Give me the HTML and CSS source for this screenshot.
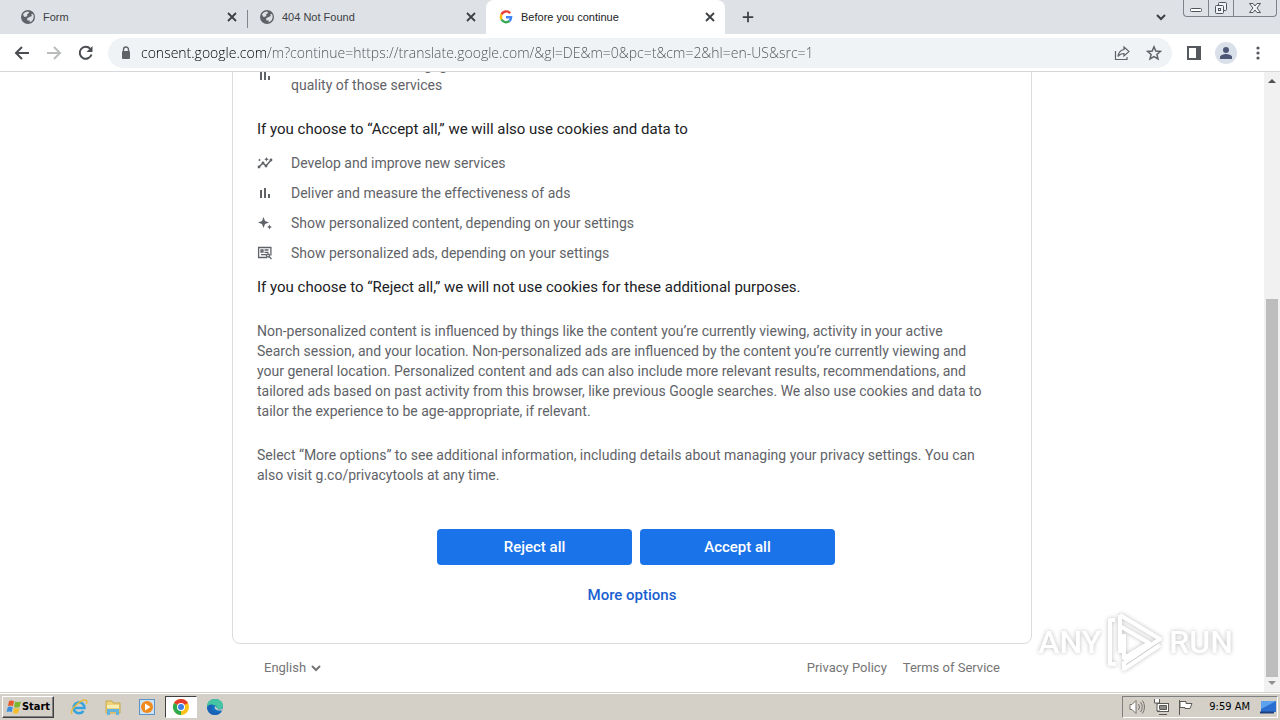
FILE: index.html
```html
<!doctype html>
<html lang="en">
  <head>
    <meta charset="UTF-8">
    <meta name="viewport" content="width=device-width, initial-scale=1.0">
    <title>Before you continue</title>
    <link rel="stylesheet" href="styles.css">
  </head>
  <body>

    <!-- shared icons -->
    <svg class="sprite" aria-hidden="true">
      <symbol id="globe" viewBox="0 0 16 16">
        <circle cx="8" cy="8" r="7" fill="#5f6368"/>
        <path d="M3 5.500C4 3.500 6 2.500 8.500 2.500L9 4 7 5.500 7.500 7 5 8 4 7.500ZM7 9.500L9.500 8 12 7 11 5.500 13 5C14.500 8 13.500 12 9.500 13.300L10 11.500 7.500 11.500Z" fill="#dee1e6"/>
      </symbol>
      <symbol id="close" viewBox="0 0 16 16">
        <path d="M4 4l8 8M12 4l-8 8" stroke="#3c4043" stroke-width="1.800"/>
      </symbol>
      <symbol id="chart" viewBox="0 0 16 16">
        <path d="M3 5h2v8H3zM7 3h2v10H7zM11 9h2v4h-2z" fill="#5f6368"/>
      </symbol>
      <symbol id="chevron" viewBox="0 0 12 12">
        <path d="M2 4l4 4 4-4" fill="none" stroke="currentColor" stroke-width="2"/>
      </symbol>
    </svg>

    <header class="tabs">
      <div class="tab">
        <svg class="icon"><use href="#globe"/></svg>
        <span class="tab-title">Form</span>
        <button class="tab-close" aria-label="Close tab"><svg class="icon"><use href="#close"/></svg></button>
      </div>
      <div class="tab tab-divided">
        <svg class="icon"><use href="#globe"/></svg>
        <span class="tab-title">404 Not Found</span>
        <button class="tab-close" aria-label="Close tab"><svg class="icon"><use href="#close"/></svg></button>
      </div>
      <div class="tab tab-active">
        <svg class="icon" viewBox="0 0 16 16" fill="none" stroke-width="2.400">
          <path d="M12.200 4.200A5.200 5.200 0 0 0 3.500 5.500" stroke="#ea4335"/>
          <path d="M3.500 5.500A5.200 5.200 0 0 0 3.500 10.500" stroke="#fbbc05"/>
          <path d="M3.500 10.500A5.200 5.200 0 0 0 11.400 12" stroke="#34a853"/>
          <path d="M8 8.200H13.100A5.200 5.200 0 0 1 11.400 12" stroke="#4285f4"/>
        </svg>
        <span class="tab-title">Before you continue</span>
        <button class="tab-close" aria-label="Close tab"><svg class="icon"><use href="#close"/></svg></button>
      </div>
      <button class="new-tab" aria-label="New tab">
        <svg class="icon" viewBox="0 0 16 16"><path d="M8 2v12M2 8h12" stroke="#3c4043" stroke-width="2"/></svg>
      </button>
      <button class="tab-search" aria-label="Search tabs"><svg class="icon-small"><use href="#chevron"/></svg></button>
      <div class="window-buttons">
        <button aria-label="Minimize"><svg class="icon" viewBox="0 0 16 16"><rect x="2.500" y="8.500" width="11" height="3" rx="1" fill="#fff" stroke="#50545c"/></svg></button>
        <button aria-label="Restore"><svg class="icon" viewBox="0 0 16 16" fill="#f1f2f5" stroke="#50545c"><rect x="5.500" y="2.500" width="8" height="8" rx="1"/><rect x="2.500" y="5.500" width="8" height="8" rx="1"/><rect x="5.500" y="8.500" width="2" height="2"/></svg></button>
        <button class="window-close" aria-label="Close"><svg class="icon" viewBox="0 0 16 16"><path d="M2.500 3.500h3.500l2 2.500 2-2.500h3.500l-3.500 4.500 3.500 4.500H10L8 10l-2 2.500H2.500L6 8z" fill="#f4f5f7" stroke="#50545c"/></svg></button>
      </div>
    </header>

    <nav class="toolbar">
      <button aria-label="Back"><svg class="icon" viewBox="0 0 16 16"><path d="M15 8H2M8 2L2 8l6 6" fill="none" stroke="#4a4d51" stroke-width="2"/></svg></button>
      <button aria-label="Forward"><svg class="icon" viewBox="0 0 16 16"><path d="M1 8h13M8 2l6 6-6 6" fill="none" stroke="#babcbe" stroke-width="2"/></svg></button>
      <button aria-label="Reload"><svg class="icon" viewBox="0 0 16 16"><path d="M13.500 9.500A6 6 0 1 1 12.300 3.800" fill="none" stroke="#4a4d51" stroke-width="2"/><path d="M14.500 1v6h-6z" fill="#4a4d51"/></svg></button>
      <div class="address">
        <svg class="icon" viewBox="0 0 16 16"><rect x="4" y="6" width="8" height="8" rx="1" fill="#5f6368"/><path d="M5.500 6.500V4.500a2.500 2.500 0 0 1 5 0v2" fill="none" stroke="#5f6368" stroke-width="1.400"/></svg>
        <input class="url" type="text" aria-label="Address" value="consent.google.com/m?continue=https://translate.google.com/&amp;gl=DE&amp;m=0&amp;pc=t&amp;cm=2&amp;hl=en-US&amp;src=1">
        <button aria-label="Share"><svg class="icon" viewBox="0 0 16 16" fill="none" stroke="#5f6368" stroke-width="1.200"><path d="M1.500 6v8.500h11.500V12"/><path d="M10 2l5 4.500-5 4.500V8.500C7.500 8.500 5.500 9.500 4 11.500 4.500 8 6.500 5 10 4.500z"/></svg></button>
        <button aria-label="Bookmark"><svg class="icon" viewBox="0 0 16 16"><path d="M8 1.800l1.800 4.200 4.600.4-3.500 3 1.100 4.500L8 11.500l-4 2.400 1.100-4.500-3.500-3 4.600-.4z" fill="none" stroke="#5f6368" stroke-width="1.500"/></svg></button>
      </div>
      <button aria-label="Side panel"><svg class="icon" viewBox="0 0 16 16"><path d="M1 1h14v14H1zM3 3v10h7V3z" fill="#55585c" fill-rule="evenodd"/></svg></button>
      <button class="profile" aria-label="Profile"><svg class="icon" viewBox="0 0 16 16" fill="#4d5877"><circle cx="8" cy="5" r="3"/><path d="M2 14v-2c0-2 4-3 6-3s6 1 6 3v2z"/></svg></button>
      <button aria-label="Menu"><svg class="icon" viewBox="0 0 16 16" fill="#55585c"><circle cx="8" cy="3" r="1.600"/><circle cx="8" cy="8" r="1.600"/><circle cx="8" cy="13" r="1.600"/></svg></button>
    </nav>

    <div class="view">
      <main class="page">
        <section class="card">
          <ul class="uses">
            <li><svg class="icon"><use href="#chart"/></svg><span>Measure audience engagement and site statistics to understand how our services are used and enhance the<br>quality of those services</span></li>
          </ul>
          <p class="lead lead-spaced">If you choose to “Accept all,” we will also use cookies and data to</p>
          <ul class="uses">
            <li>
              <svg class="icon" viewBox="0 0 16 16"><path d="M2 12l4-4 3 3 5-6" fill="none" stroke="#5f6368" stroke-width="1.500"/><g fill="#5f6368"><circle cx="2" cy="12" r="1.400"/><circle cx="6" cy="8" r="1.400"/><circle cx="9" cy="11" r="1.400"/><circle cx="14" cy="5" r="1.400"/><path d="M9.500 2l.7 1.600 1.600.7-1.600.7-.7 1.600-.7-1.600-1.600-.7 1.600-.7zM2.500 3.500l.5 1 1 .5-1 .5-.5 1-.5-1-1-.5 1-.5z"/></g></svg>
              <span>Develop and improve new services</span>
            </li>
            <li>
              <svg class="icon"><use href="#chart"/></svg>
              <span>Deliver and measure the effectiveness of ads</span>
            </li>
            <li>
              <svg class="icon" viewBox="0 0 16 16" fill="#5f6368"><path d="M6.500 2l1.500 4 4 1.500L8 9l-1.500 4L5 9 1 7.500 5 6zM12.500 9.500l.8 1.700 1.700.8-1.700.8-.8 1.700-.8-1.700-1.700-.8 1.700-.8z"/></svg>
              <span>Show personalized content, depending on your settings</span>
            </li>
            <li>
              <svg class="icon" viewBox="0 0 16 16" fill="none" stroke="#5f6368" stroke-width="1.300"><path d="M10 12.500H1.600v-10h12.300v8"/><path d="M4 5h2v2H4zM7.500 5h4M7.500 7.300h4M4 9.700h5"/><circle cx="11" cy="10.500" r="1.500"/><path d="M12 11.500l2.500 2.500"/></svg>
              <span>Show personalized ads, depending on your settings</span>
            </li>
          </ul>
          <p class="lead">If you choose to “Reject all,” we will not use cookies for these additional purposes.</p>
          <p class="text">Non-personalized content is influenced by things like the content you’re currently viewing, activity in your active<br>
            Search session, and your location. Non-personalized ads are influenced by the content you’re currently viewing and<br>
            your general location. Personalized content and ads can also include more relevant results, recommendations, and<br>
            tailored ads based on past activity from this browser, like previous Google searches. We also use cookies and data to<br>
            tailor the experience to be age-appropriate, if relevant.</p>
          <p class="text">Select “More options” to see additional information, including details about managing your privacy settings. You can<br>
            also visit g.co/privacytools at any time.</p>
          <div class="choices">
            <button class="btn">Reject all</button>
            <button class="btn">Accept all</button>
          </div>
          <a class="more" href="#">More options</a>
        </section>
        <footer class="footer">
          <div class="language">
            <select aria-label="Language"><option>English</option></select>
            <svg class="icon-small"><use href="#chevron"/></svg>
          </div>
          <a href="#">Privacy Policy</a>
          <a href="#">Terms of Service</a>
        </footer>
      </main>
      <div class="scrollbar">
        <svg class="icon-small" viewBox="0 0 12 12"><path d="M2 8l4-4 4 4z" fill="#505050"/></svg>
        <div class="track"><div class="thumb"></div></div>
        <svg class="icon-small" viewBox="0 0 12 12"><path d="M2 4l4 4 4-4z" fill="#909090"/></svg>
      </div>
      <div class="watermark">
        <span>ANY</span>
        <svg viewBox="0 0 60 64" fill="none" stroke="#fff" stroke-width="4" stroke-linejoin="round">
          <path d="M10 10H5v44h6"/>
          <path d="M15 5v38M15 5l40 24-36 24v6l36-24M15 16l29 17-25 15V24"/>
        </svg>
        <span>RUN</span>
      </div>
    </div>

    <div class="taskbar">
      <button class="start">
        <svg class="icon" viewBox="0 0 16 16"><path d="M3 2q2-1 5 0L7 7q-3-1-5 0z" fill="#e8582a"/><path d="M9 2.500q3 1 6 0L13.500 8q-3 1-5.500 0z" fill="#7db72f"/><path d="M1.800 8q2-1 5 0l-1 5Q3 12 .5 13z" fill="#3b8ede"/><path d="M8 9q3 1 5.500 0l-1.500 5q-2.500 1-5 0z" fill="#f6bd26"/></svg>
        Start
      </button>
      <div class="launch">
        <button aria-label="Internet Explorer"><svg viewBox="0 0 18 18" fill="none"><path d="M4 10h10.500A5.500 5.500 0 1 0 13.500 13" stroke="#35a3df" stroke-width="2.500"/><path d="M2 16C-1 12 12 0 16.500 2.500c1 .8.500 2-.3 3.500" stroke="#e9b83a" stroke-width="1.400"/></svg></button>
        <button aria-label="Explorer"><svg viewBox="0 0 18 18"><path d="M2 3h6l1 2h7v10H2z" fill="#ecd27a" stroke="#c9a84a"/><path d="M3 7h12v3H3z" fill="#f9edb4"/><path d="M3 17v-6h12v6h-3v-3H6v3z" fill="#62b4dc"/></svg></button>
        <button aria-label="Media Player"><svg viewBox="0 0 18 18"><rect x="1.500" y="1.500" width="15" height="15" fill="#cfe2f3" stroke="#5b93c9"/><circle cx="9" cy="9" r="6" fill="#f08a1d"/><path d="M7 5.500l5.500 3.500L7 12.500z" fill="#fff"/></svg></button>
        <button class="running" aria-label="Chrome"><svg viewBox="0 0 18 18"><circle cx="9" cy="9" r="8" fill="#fbc116"/><path d="M9 9L2.070 5A8 8 0 0 1 15.930 5z" fill="#e33b2e"/><path d="M9 9L9 17A8 8 0 0 1 2.070 5z" fill="#2da94f"/><circle cx="9" cy="9" r="4" fill="#fff"/><circle cx="9" cy="9" r="3" fill="#3f7de8"/></svg></button>
        <button aria-label="Edge"><svg viewBox="0 0 18 18"><circle cx="9" cy="9" r="8" fill="#1273c4"/><path d="M1 9C1 4 4 1 9 1s8 3 8 6.500S14 12 11 11c1-4-6-6-10-2z" fill="#45c5a1"/><path d="M7 7c-3 4 0 8 8.500 6.500C14 16 11 17 9 17 3 17 1 12 1 9c2-3 5-3 6-2z" fill="#1a62b5"/><path d="M9 8c-1 3 1 5 7.500 4.500l.5-2.500c-2 2-6 2-6 0z" fill="#d6d0c8"/></svg></button>
      </div>
      <div class="tray">
        <svg viewBox="0 0 18 18" fill="#fff" stroke="#77736c"><path d="M2 6.500h2l4-4v13l-4-4H2z"/><path d="M10.500 6q2 3 0 6M12.500 4q3.500 5 0 10M14.500 2.500q4 6.500 0 13" fill="none"/></svg>
        <svg viewBox="0 0 18 18" fill="#fff" stroke="#5d5a55"><rect x="5.500" y="5.500" width="11" height="8"/><path d="M7.500 7.500h7v4h-7z" fill="#8d8b88"/><path d="M7 16.500h8M2.500 1v4h5V1M5 5v8h3"/></svg>
        <svg viewBox="0 0 18 18" fill="#fff" stroke="#5d5a55"><path d="M3.500 17V2M4 3.500h6v2h6l-2 5H9v-1H4z"/></svg>
        <time>9:59 AM</time>
        <svg viewBox="0 0 18 18"><path d="M2 3h15v11H2z" fill="#2a6fd0"/><path d="M2 3h15L2 11z" fill="#5da2ee"/><path d="M1 13.500h14v2H1z" fill="#1e3f7c"/></svg>
      </div>
    </div>

  </body>
</html>
```
FILE: styles.css
```css
* {
  box-sizing: border-box;
}

body {
  display: flex;
  flex-direction: column;
  height: 100vh;
  margin: 0;
  overflow: hidden;
  background: #fff;
  font-family: Roboto, sans-serif;
  font-size: 14px;
  line-height: 20px;
}

button {
  display: flex;
  align-items: center;
  justify-content: center;
  padding: 0;
  border: 0;
  background: none;
  font: inherit;
}

a {
  text-decoration: none;
}

.sprite {
  position: absolute;
  width: 0;
  height: 0;
}

.icon {
  flex: none;
  width: 16px;
  height: 16px;
}

.icon-small {
  flex: none;
  width: 12px;
  height: 12px;
}

/* Tab strip */
.tabs {
  display: flex;
  flex: none;
  height: 34px;
  padding-left: 8px;
  background: #dee1e6;
  color: #3c4043;
  font-family: "Liberation Sans", sans-serif;
  font-size: 11px;
}

.tab {
  display: flex;
  align-items: center;
  gap: 7px;
  width: 239px;
  padding: 0 7px 0 12px;
}

.tab-divided {
  background: linear-gradient(#80868b, #80868b) 0 10px / 1px 18px no-repeat;
}

.tab-active {
  border-radius: 8px 8px 0 0;
  background: #fff;
  color: #202124;
}

.tab-title {
  flex: 1;
}

.new-tab {
  width: 46px;
}

.new-tab .icon {
  width: 14px;
}

.tab-search {
  width: 20px;
  margin-left: auto;
  color: #3c4043;
}

.window-buttons {
  display: flex;
  height: 17px;
  margin: 0 3px 0 12px;
  border: 1px solid #7d828b;
  border-top: 0;
  border-radius: 0 0 4px 4px;
}

.window-buttons button {
  width: 25px;
  border-right: 1px solid #7d828b;
}

.window-buttons .window-close {
  width: 42px;
  border-right: 0;
}

/* Toolbar */
.toolbar {
  display: flex;
  flex: none;
  align-items: center;
  height: 38px;
  padding: 0 6px;
  border-bottom: 1px solid #d5d7da;
}

.toolbar button {
  width: 32px;
  height: 32px;
}

.address {
  display: flex;
  flex: 1;
  align-items: center;
  height: 30px;
  margin: 0 6px;
  padding: 0 2px 0 10px;
  border-radius: 15px;
  background: #f0f3f5;
}

.url {
  flex: 1;
  min-width: 0;
  margin-left: 7px;
  padding: 0;
  border: 0;
  outline: 0;
  /* host is darker than the rest of the address */
  background: linear-gradient(to right, #000 126px, #4c5054 126px);
  -webkit-background-clip: text;
  background-clip: text;
  color: transparent;
  font-family: "Open Sans", sans-serif;
  font-size: 14px;
  font-weight: 300;
}

.toolbar .profile {
  width: 22px;
  height: 22px;
  margin: 0 5px;
  border-radius: 50%;
  background: #d9e0ea;
}

/* Page, scrolled to its end */
.view {
  position: relative;
  display: flex;
  flex: 1;
  min-height: 0;
  overflow: hidden;
}

.page {
  display: flex;
  flex: 1;
  flex-direction: column;
  align-items: center;
  justify-content: flex-end;
}

.card {
  flex: none;
  width: 100%;
  max-width: 800px;
  padding: 24px;
  border: 1px solid #dadce0;
  border-radius: 8px;
  color: #5f6368;
}

.uses {
  display: grid;
  gap: 10px;
  margin: 0;
  padding: 0;
  list-style: none;
}

.uses li {
  display: flex;
  align-items: center;
  gap: 18px;
  white-space: nowrap;
}

.lead {
  margin: 14px 0;
  color: #202124;
  font-size: 15px;
}

.lead-spaced {
  margin-top: 24px;
}

.text {
  margin: 24px 0 0;
  white-space: nowrap;
}

.choices {
  display: flex;
  gap: 8px;
  justify-content: center;
  margin-top: 44px;
  padding-left: 8px;
}

.btn {
  width: 195px;
  height: 36px;
  border-radius: 4px;
  background: #1a73e8;
  color: #fff;
  font-size: 15px;
  font-weight: 500;
}

.more {
  display: block;
  width: 128px;
  margin: 12px auto 6px;
  padding: 8px 0;
  color: #1a5fd0;
  font-size: 15px;
  font-weight: 500;
  text-align: center;
}

.footer {
  display: flex;
  flex: none;
  gap: 16px;
  align-items: center;
  width: 100%;
  max-width: 800px;
  height: 48px;
  padding: 0 32px;
  font-size: 13px;
}

.footer a,
.language {
  color: #757575;
}

.language {
  display: flex;
  gap: 3px;
  align-items: center;
  margin-right: auto;
}

.language select {
  padding: 0;
  border: 0;
  appearance: none;
  background: none;
  color: inherit;
  font: inherit;
}

.scrollbar {
  display: flex;
  flex-direction: column;
  align-items: center;
  width: 16px;
  padding: 3px 0;
  background: #f1f1f1;
}

.track {
  display: flex;
  flex: 1;
  flex-direction: column;
  justify-content: flex-end;
  width: 12px;
}

.thumb {
  height: 64%;
  background: #bdbdbd;
}

.watermark {
  position: absolute;
  right: 47px;
  bottom: 18px;
  display: flex;
  gap: 4px;
  align-items: center;
  color: #fff;
  font-size: 32px;
  font-weight: 500;
  line-height: 64px;
  filter: drop-shadow(0 0 2px #bbb);
}

.watermark svg {
  width: 60px;
  height: 64px;
}

/* Taskbar */
.taskbar {
  display: flex;
  flex: none;
  align-items: center;
  height: 28px;
  padding: 0 2px;
  border-top: 1px solid #d4d0c8;
  background: #d4d0c8;
  box-shadow: inset 0 1px #fff;
  font-family: "DejaVu Sans Condensed", "DejaVu Sans", sans-serif;
  font-size: 11px;
}

.start {
  width: 52px;
  height: 22px;
  border: 1px solid;
  border-color: #fff #404040 #404040 #fff;
  box-shadow: inset -1px -1px #808080;
  font-weight: bold;
}

.launch {
  display: flex;
  gap: 2px;
  margin-left: 9px;
}

.launch button {
  width: 32px;
  height: 22px;
}

.launch svg,
.tray svg {
  width: 18px;
  height: 18px;
}

.launch .running {
  border: 1px solid;
  border-color: #404040 #fff #fff #404040;
  background: #fff;
}

.tray {
  display: flex;
  gap: 6px;
  align-items: center;
  height: 22px;
  margin-left: auto;
  padding: 0 0 0 5px;
  border: 1px solid;
  border-color: #808080 #fff #fff #808080;
}

.tray time {
  margin: 0 3px 0 9px;
}
```
